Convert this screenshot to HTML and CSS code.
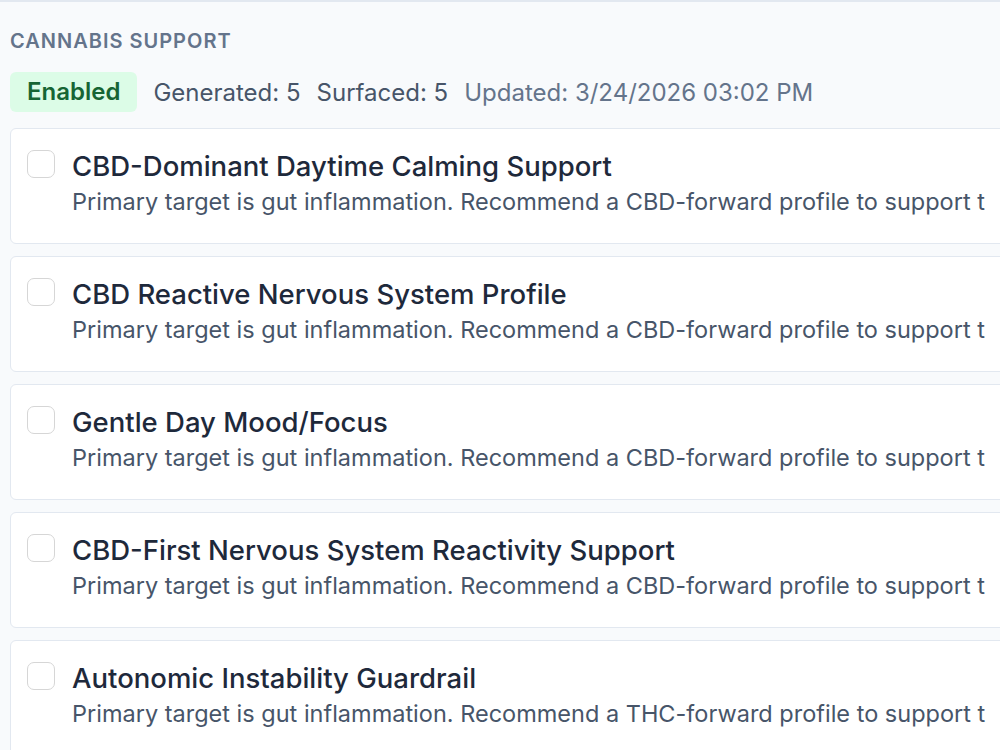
FILE: index.html
```html
<!DOCTYPE html>
<html lang="en">
<head>
    <meta charset="UTF-8">
    <meta name="viewport" content="width=device-width, initial-scale=1.0">
    <title>Cannabis Support</title>
    <link rel="stylesheet" href="styles.css">
</head>
<body>
    <div class="panel">
        <h4 class="section-title">CANNABIS SUPPORT</h4>
        <div class="meta">
            <span class="badge">Enabled</span>
            <span class="stat">Generated: 5</span>
            <span class="stat">Surfaced: 5</span>
            <span class="updated">Updated: 3/24/2026 03:02 PM</span>
        </div>

        <div class="list">
            <label class="item">
                <input type="checkbox">
                <div class="item-body">
                    <div class="item-title">CBD-Dominant Daytime Calming Support</div>
                    <div class="item-desc">Primary target is gut inflammation. Recommend a CBD-forward profile to support t</div>
                </div>
            </label>
            <label class="item">
                <input type="checkbox">
                <div class="item-body">
                    <div class="item-title">CBD Reactive Nervous System Profile</div>
                    <div class="item-desc">Primary target is gut inflammation. Recommend a CBD-forward profile to support t</div>
                </div>
            </label>
            <label class="item">
                <input type="checkbox">
                <div class="item-body">
                    <div class="item-title">Gentle Day Mood/Focus</div>
                    <div class="item-desc">Primary target is gut inflammation. Recommend a CBD-forward profile to support t</div>
                </div>
            </label>
            <label class="item">
                <input type="checkbox">
                <div class="item-body">
                    <div class="item-title">CBD-First Nervous System Reactivity Support</div>
                    <div class="item-desc">Primary target is gut inflammation. Recommend a CBD-forward profile to support t</div>
                </div>
            </label>
            <label class="item">
                <input type="checkbox">
                <div class="item-body">
                    <div class="item-title">Autonomic Instability Guardrail</div>
                    <div class="item-desc">Primary target is gut inflammation. Recommend a THC-forward profile to support t</div>
                </div>
            </label>
        </div>
    </div>
</body>
</html>
```

FILE: styles.css
```css
html, body {
    margin: 0;
    height: 100%;
}
body {
    font-family: Inter, "Noto Sans", Arial, sans-serif;
    background-color: #f8fafc;
    overflow: hidden;
    border-top: 2px solid #e2e8f0;
    box-sizing: border-box;
}
.panel {
    width: 1400px;
    padding: 27px 0 0 10px;
}
.section-title {
    margin: 0;
    font-size: 20px;
    font-weight: 600;
    letter-spacing: 1px;
    color: #64748b;
    line-height: 24px;
}
.meta {
    display: flex;
    align-items: center;
    gap: 16px;
    margin-top: 19px;
    font-size: 24px;
    white-space: nowrap;
}
.badge {
    background-color: #dcfce7;
    color: #166534;
    font-weight: 600;
    border-radius: 6px;
    padding: 0 17px;
    height: 40px;
    line-height: 40px;
}
.stat {
    color: #475569;
}
.updated {
    color: #64748b;
}
.list {
    display: flex;
    flex-direction: column;
    gap: 12px;
    margin-top: 16px;
}
.item {
    display: flex;
    align-items: flex-start;
    gap: 17px;
    background: #ffffff;
    border: 1.5px solid #e2e8f0;
    border-radius: 6px;
    padding: 19px 16px 24px;
    white-space: nowrap;
}
.item input[type="checkbox"] {
    appearance: none;
    width: 28px;
    height: 28px;
    margin: 2px 0 0 0;
    border: 1.5px solid #d6d6d6;
    border-radius: 7px;
    background: #fff;
    flex-shrink: 0;
}
.item-title {
    font-size: 27.5px;
    line-height: 36px;
    color: #1e293b;
    font-weight: 500;
}
.item-desc {
    font-size: 23.5px;
    line-height: 35px;
    color: #475569;
}
```
